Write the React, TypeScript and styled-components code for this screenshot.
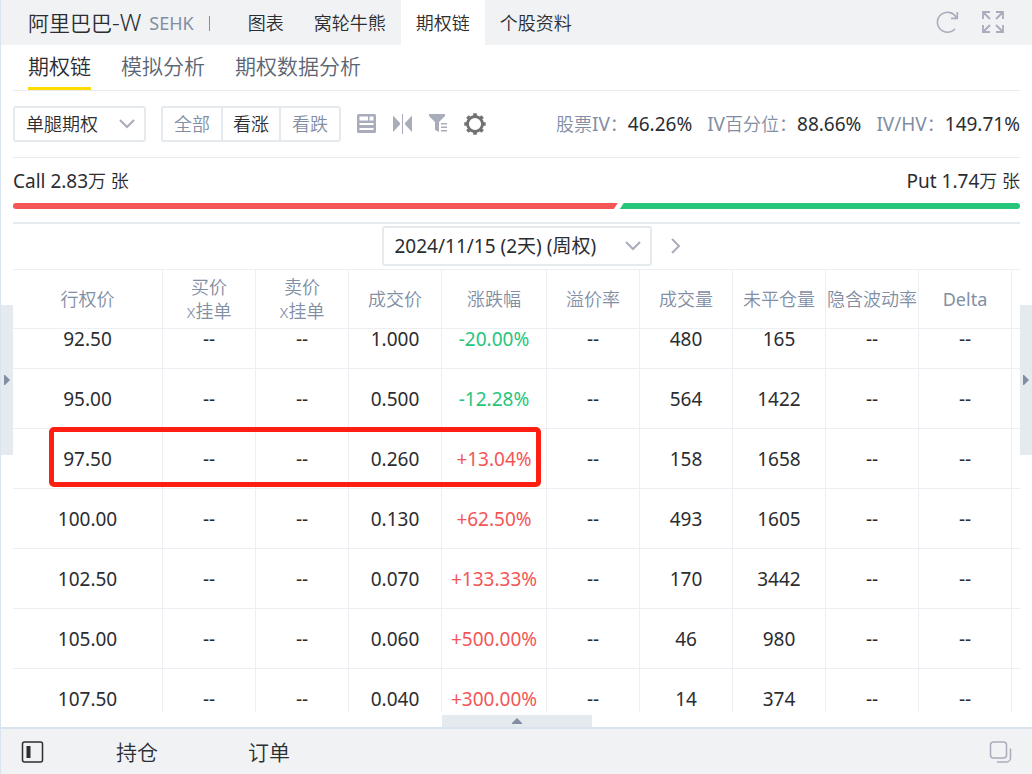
import React from "react";
import styled, { createGlobalStyle } from "styled-components";

const ink = "#2b2d31";
const muted = "#828ea3";
const icon = "#a9adbb";
const line = "#e8ebee";
const grid = "#eeeff4";
const control = "#e5eaef";
const chrome = "#f0f2f4";
const frame = "#d9e4ef";
const up = "#f45656";
const down = "#26c57c";

const GlobalStyle = createGlobalStyle`
  * { box-sizing: border-box; }
  body { margin: 0; background: #fff; }
  body, button, select {
    font-family: "Noto Sans", "Noto Sans CJK SC", sans-serif;
    font-weight: 350;
    color: ${ink};
  }
  button { border: 0; padding: 0; background: none; cursor: pointer; }
  a { color: inherit; text-decoration: none; }
  svg { display: block; }
`;

const Shell = styled.div`
  display: flex;
  flex-direction: column;
  height: 100vh;
  border-left: 1px solid ${frame};
`;

const Header = styled.header`
  display: flex;
  flex: none;
  align-items: center;
  height: 45px;
  padding: 0 27px;
  background: ${chrome};
`;

const StockName = styled.h1`
  margin: 0;
  font-size: 21px;
  line-height: 30px;
  font-weight: 350;
  span { font-size: 24px; }
`;

const Market = styled.span`
  margin-left: 8px;
  font-size: 18px;
  font-weight: 400;
  color: ${muted};
`;

const Divider = styled.span`
  width: 1px;
  height: 15px;
  margin: 2px 23px 0 15px;
  background: ${muted};
`;

const TopTabs = styled.nav`
  display: flex;
  flex: 1;
  align-self: stretch;
`;

const TopTab = styled.a<{ $active?: boolean }>`
  padding: 0 15px;
  font-size: 18px;
  line-height: 47px;
  height: 45px;
  white-space: nowrap;
  background: ${(p) => (p.$active ? "#fff" : "transparent")};
`;

const HeaderActions = styled.div`
  display: flex;
  gap: 22px;
  padding-bottom: 2px;
`;

const WorkArea = styled.main`
  position: relative;
  display: flex;
  flex: 1;
  flex-direction: column;
  min-height: 0;
  padding: 0 12px 3px;
`;

const SubTabs = styled.nav`
  display: flex;
  flex: none;
  gap: 30px;
  height: 46px;
  padding: 0 15px;
  border-bottom: 1px solid ${line};
`;

const SubTab = styled.a<{ $active?: boolean }>`
  height: 45px;
  font-size: 21px;
  line-height: 42px;
  color: ${(p) => (p.$active ? ink : "#5b6573")};
  border-bottom: 3px solid ${(p) => (p.$active ? "#ffdc00" : "transparent")};
`;

const Toolbar = styled.div`
  display: flex;
  flex: none;
  align-items: center;
  height: 67px;
  border-bottom: 1px solid ${line};
`;

const SelectBox = styled.div<{ $size: "small" | "large" }>`
  position: relative;
  width: ${(p) => (p.$size === "small" ? 133 : 270)}px;
  height: ${(p) => (p.$size === "small" ? 36 : 40)}px;
  select {
    appearance: none;
    width: 100%;
    height: 100%;
    padding: 0 32px 0 11px;
    border: 2px solid ${control};
    border-radius: 3px;
    background: #fff;
    font-size: ${(p) => (p.$size === "small" ? 18 : 19)}px;
    font-weight: ${(p) => (p.$size === "small" ? 350 : 400)};
  }
  svg {
    position: absolute;
    right: 10px;
    top: 50%;
    transform: translateY(-50%);
    pointer-events: none;
  }
`;

const Segments = styled.div`
  display: flex;
  width: 180px;
  height: 36px;
  margin: 0 16px 0 15px;
  border: 2px solid ${control};
  border-radius: 3px;
`;

const Segment = styled.button<{ $active?: boolean }>`
  width: 58px;
  font-size: 18px;
  line-height: 32px;
  color: ${(p) => (p.$active ? ink : muted)};
  & + & { border-left: 2px solid ${control}; }
  &:last-child { flex: 1; }
`;

const Tools = styled.div`
  display: flex;
  flex: 1;
  gap: 15px;
`;

const Stats = styled.dl`
  display: flex;
  gap: 15px;
  margin: 0;
`;

const Stat = styled.div`
  display: flex;
  align-items: baseline;
  white-space: nowrap;
  line-height: 26px;
  dt { font-size: 18px; color: ${muted}; }
  dt span { font-size: 19px; font-weight: 400; }
  dd { margin: 0; font-size: 19px; font-weight: 400; }
`;

const Volume = styled.section`
  flex: none;
  height: 66px;
  padding-top: 10px;
  border-bottom: 2px solid ${control};
`;

const VolumeLabels = styled.div`
  display: flex;
  justify-content: space-between;
  font-size: 19px;
  line-height: 26px;
  font-weight: 400;
  small { font-size: 18px; font-weight: 350; }
`;

const VolumeBar = styled.div`
  display: flex;
  height: 6px;
  margin-top: 9px;
`;

const CallShare = styled.div`
  flex: 606;
  margin-right: -4px;
  border-radius: 3px 0 0 3px;
  background: ${up};
  clip-path: polygon(0 0, 100% 0, calc(100% - 4px) 100%, 0 100%);
`;

const PutShare = styled.div`
  flex: 401;
  margin-left: 6px;
  border-radius: 0 3px 3px 0;
  background: ${down};
  clip-path: polygon(4px 0, 100% 0, 100% 100%, 0 100%);
`;

const Expiry = styled.div`
  display: flex;
  flex: none;
  align-items: center;
  justify-content: center;
  gap: 18px;
  height: 45px;
  padding: 0 0 1px 30px;
`;

const TableView = styled.div`
  position: relative;
  flex: 1;
  min-height: 0;
  overflow: hidden;
`;

const Chain = styled.table`
  width: 100%;
  table-layout: fixed;
  border-collapse: separate;
  border-spacing: 0;
  border-top: 1px solid ${grid};
  th, td {
    height: 60px;
    padding: 0;
    border: 0 solid ${grid};
    border-width: 0 1px 1px 0;
    text-align: center;
    white-space: nowrap;
    font-size: 19px;
    line-height: 20px;
    font-weight: 400;
  }
  th {
    height: 59px;
    font-size: 18px;
    line-height: 24px;
    font-weight: 350;
    color: ${muted};
  }
  th:last-child, td:last-child { border-right: 0; }
  tbody tr:first-child td { height: 40px; padding-bottom: 19px; }
`;

const Latin = styled.span`
  font-weight: 400;
`;

const Column = styled.col<{ $width?: number }>`
  width: ${(p) => (p.$width ? `${p.$width}px` : "auto")};
`;

const Change = styled.td`
  color: ${down};
  &[data-trend="up"] { color: ${up}; }
`;

const Highlight = styled.div`
  position: absolute;
  left: 36px;
  top: 158px;
  width: 492px;
  height: 60px;
  border: 5px solid #ff1e12;
  border-radius: 5px;
  pointer-events: none;
`;

const SideHandle = styled.button<{ $side: "left" | "right" }>`
  position: absolute;
  ${(p) => p.$side}: 0;
  top: 50%;
  display: grid;
  place-items: center;
  width: 12px;
  height: 150px;
  transform: translateY(-50%);
  background: ${control};
`;

const BottomHandle = styled.button`
  display: grid;
  flex: none;
  place-items: center;
  align-self: center;
  width: 150px;
  height: 12px;
  background: ${control};
`;

const Footer = styled.footer`
  display: flex;
  flex: none;
  align-items: center;
  height: 47px;
  padding: 0 20px;
  border-top: 2px solid ${frame};
  background: ${chrome};
`;

const FooterTabs = styled.nav`
  display: flex;
  flex: 1;
  gap: 90px;
  margin-left: 72px;
  font-size: 21px;
  line-height: 30px;
`;

const Chevron = () => (
  <svg width="18" height="12" viewBox="0 0 18 12" fill="none" stroke={icon} strokeWidth="2">
    <path d="M2 2l7 7 7-7" />
  </svg>
);

const Triangle = ({ upward }: { upward?: boolean }) => (
  <svg width="10" height="10" viewBox="0 0 10 10" fill={muted}>
    <path d={upward ? "M5 2L10 7V8H0V7Z" : "M2 0H3L8 5L3 10H2Z"} />
  </svg>
);

const columns: [React.ReactNode[], number][] = [
  [["行权价"], 150],
  [["买价", "x挂单"], 93],
  [["卖价", "x挂单"], 93],
  [["成交价"], 93],
  [["涨跌幅"], 105],
  [["溢价率"], 93],
  [["成交量"], 93],
  [["未平仓量"], 93],
  [["隐含波动率"], 93],
  [[<Latin key="delta">Delta</Latin>], 93],
];

const rows = [
  ["92.50", "1.000", "-20.00%", "480", "165"],
  ["95.00", "0.500", "-12.28%", "564", "1422"],
  ["97.50", "0.260", "+13.04%", "158", "1658"],
  ["100.00", "0.130", "+62.50%", "493", "1605"],
  ["102.50", "0.070", "+133.33%", "170", "3442"],
  ["105.00", "0.060", "+500.00%", "46", "980"],
  ["107.50", "0.040", "+300.00%", "14", "374"],
];

const stats = [
  { before: "股票", latin: "IV", after: "：", value: "46.26%" },
  { before: "", latin: "IV", after: "百分位：", value: "88.66%" },
  { before: "", latin: "IV/HV", after: "：", value: "149.71%" },
];

export default function App() {
  return (
    <Shell>
      <GlobalStyle />
      <Header>
        <StockName>阿里巴巴<span>-W</span></StockName>
        <Market>SEHK</Market>
        <Divider />
        <TopTabs>
          <TopTab href="#chart">图表</TopTab>
          <TopTab href="#warrants">窝轮牛熊</TopTab>
          <TopTab href="#options" $active>期权链</TopTab>
          <TopTab href="#profile">个股资料</TopTab>
        </TopTabs>
        <HeaderActions>
          <button aria-label="刷新">
            <svg width="23" height="24" viewBox="0 0 23 24" fill="none" stroke={icon} strokeWidth="1.6">
              <path d="M19 18.8A10 10 0 1 1 20.5 8M21.3 2V8.4H15" />
            </svg>
          </button>
          <button aria-label="全屏">
            <svg width="24" height="24" viewBox="0 0 24 24" fill="none" stroke={icon} strokeWidth="1.8">
              <path d="M9 2H2V9M2 2L9 9M15 2H22V9M22 2L15 9M2 15V22H9M2 22L9 15M22 15V22H15M22 22L15 15" />
            </svg>
          </button>
        </HeaderActions>
      </Header>

      <WorkArea>
        <SubTabs>
          <SubTab href="#chain" $active>期权链</SubTab>
          <SubTab href="#simulate">模拟分析</SubTab>
          <SubTab href="#data">期权数据分析</SubTab>
        </SubTabs>

        <Toolbar>
          <SelectBox $size="small">
            <select aria-label="策略">
              <option>单腿期权</option>
            </select>
            <Chevron />
          </SelectBox>
          <Segments>
            <Segment>全部</Segment>
            <Segment $active>看涨</Segment>
            <Segment>看跌</Segment>
          </Segments>
          <Tools>
            <button aria-label="布局">
              <svg width="20" height="20" viewBox="0 0 20 20">
                <rect x="0" y="0" width="19" height="19" rx="1.5" fill={icon} />
                <path d="M2.5 2.5H11V6.5H2.5ZM12.5 2.5H16.5V6.5H12.5ZM2.5 9H16.5V11H2.5ZM2.5 14H16.5V16H2.5Z" fill="#fff" />
              </svg>
            </button>
            <button aria-label="对称">
              <svg width="22" height="20" viewBox="0 0 22 20" fill={icon}>
                <path d="M1 1.5L8 9V10.5L1 18ZM20 1.5L13 9V10.5L20 18ZM10 0H11V20H10Z" />
              </svg>
            </button>
            <button aria-label="筛选">
              <svg width="20" height="20" viewBox="0 0 20 20" fill={icon}>
                <path d="M0 0H16V2L10 8V18L6 16V8L0 2ZM12 9H18V10.5H12ZM12 12.5H18V14H12ZM12 16H18V17.5H12Z" />
              </svg>
            </button>
            <button aria-label="设置">
              <svg width="22" height="22" viewBox="-11 -11 22 22" fill="none" stroke="#717171">
                <circle r="7.5" strokeWidth="2.8" />
                <path d="M0-10.7V-7M0 7V10.7M-10.7 0H-7M7 0H10.7M-7.6-7.6L-5.5-5.5M5.5 5.5L7.6 7.6M-7.6 7.6L-5.5 5.5M5.5-5.5L7.6-7.6" strokeWidth="3.6" />
              </svg>
            </button>
          </Tools>
          <Stats>
            {stats.map(({ before, latin, after, value }) => (
              <Stat key={value}>
                <dt>{before}<span>{latin}</span>{after}</dt>
                <dd>{value}</dd>
              </Stat>
            ))}
          </Stats>
        </Toolbar>

        <Volume>
          <VolumeLabels>
            <span>Call 2.83<small>万 张</small></span>
            <span>Put 1.74<small>万 张</small></span>
          </VolumeLabels>
          <VolumeBar>
            <CallShare />
            <PutShare />
          </VolumeBar>
        </Volume>

        <Expiry>
          <SelectBox $size="large">
            <select aria-label="到期日">
              <option>2024/11/15 (2天) (周权)</option>
            </select>
            <Chevron />
          </SelectBox>
          <button aria-label="下一个到期日">
            <svg width="12" height="18" viewBox="0 0 12 18" fill="none" stroke={icon} strokeWidth="2">
              <path d="M2 2l7 7-7 7" />
            </svg>
          </button>
        </Expiry>

        <TableView>
          <Chain>
            <colgroup>
              {columns.map(([, width], i) => (
                <Column key={i} $width={width} />
              ))}
              <Column />
            </colgroup>
            <thead>
              <tr>
                {columns.map(([label], i) => (
                  <th key={i} scope="col">
                    {label.map((part, j) => <div key={j}>{part}</div>)}
                  </th>
                ))}
                <th />
              </tr>
            </thead>
            <tbody>
              {rows.map(([strike, price, change, volume, open]) => (
                <tr key={strike}>
                  <td>{strike}</td>
                  <td>--</td>
                  <td>--</td>
                  <td>{price}</td>
                  <Change data-trend={change.startsWith("+") ? "up" : "down"}>{change}</Change>
                  <td>--</td>
                  <td>{volume}</td>
                  <td>{open}</td>
                  <td>--</td>
                  <td>--</td>
                  <td />
                </tr>
              ))}
            </tbody>
          </Chain>
          <Highlight />
        </TableView>

        <SideHandle $side="left" aria-label="展开左侧栏"><Triangle /></SideHandle>
        <SideHandle $side="right" aria-label="收起右侧栏"><Triangle /></SideHandle>
      </WorkArea>

      <BottomHandle aria-label="展开底部栏"><Triangle upward /></BottomHandle>
      <Footer>
        <button aria-label="侧边栏">
          <svg width="23" height="22" viewBox="0 0 23 22" fill="none" stroke={ink}>
            <rect x="1.5" y="1" width="20" height="20" rx="2" strokeWidth="1.5" />
            <path d="M7.5 5V17" strokeWidth="4" />
          </svg>
        </button>
        <FooterTabs>
          <a href="#positions">持仓</a>
          <a href="#orders">订单</a>
        </FooterTabs>
        <button aria-label="窗口">
          <svg width="23" height="22" viewBox="0 0 23 22" fill="none" stroke={icon} strokeWidth="1.5">
            <rect x="1.5" y="1" width="16" height="16" rx="3" />
            <path d="M21.5 7.5V17A4 4 0 0 1 17.5 21H8" />
          </svg>
        </button>
      </Footer>
    </Shell>
  );
}
